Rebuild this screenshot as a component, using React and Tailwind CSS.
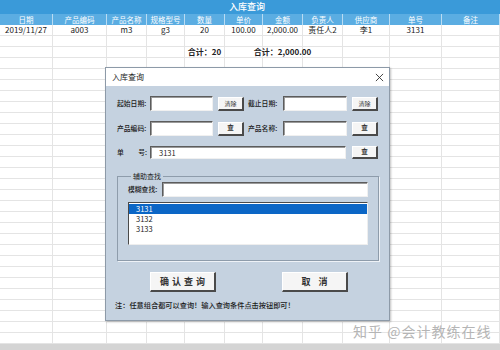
import React from "react";

const cols = [
  { w: "w-[53px]", label: "日期" },
  { w: "w-[54px]", label: "产品编码" },
  { w: "w-[40px]", label: "产品名称" },
  { w: "w-[38px]", label: "规格型号" },
  { w: "w-[40px]", label: "数量" },
  { w: "w-[38px]", label: "单价" },
  { w: "w-[40px]", label: "金额" },
  { w: "w-[40px]", label: "负责人" },
  { w: "w-[47px]", label: "供应商" },
  { w: "w-[52px]", label: "单号" },
  { w: "w-[58px]", label: "备注" },
];

const dataRow = ["2019/11/27", "a003", "m3", "g3", "20", "100.00", "2,000.00", "责任人2", "李1", "3131", ""];
const totalRow = ["", "", "", "", "合计：20", "", "合计：2,000.00", "", "", "", ""];

const font = { fontFamily: '"Noto Sans CJK SC", "Noto Sans", sans-serif' };

function Row({ cells, bold }) {
  return (
    <div className="flex h-[11px]">
      {cols.map((c, i) => (
        <div
          key={i}
          className={`${c.w} shrink-0 border-r border-b border-[#e4e4e4] flex items-center justify-center text-[8px] leading-none whitespace-nowrap text-[#222] ${bold ? "font-bold" : ""}`}
        >
          {cells[i]}
        </div>
      ))}
    </div>
  );
}

function Input({ className = "", children }) {
  return (
    <div
      className={`bg-white border-t border-l border-t-[#5c5c5c] border-l-[#5c5c5c] border-b border-r border-b-[#f0f0f0] border-r-[#f0f0f0] shadow-[inset_1px_1px_0_#9a9a9a] flex items-center pl-[6px] text-[7.5px] text-[#222] ${className}`}
    >
      {children}
    </div>
  );
}

function Btn({ className = "", children }) {
  return (
    <div
      className={`bg-[#f5f5f5] border-t border-l border-white border-b-2 border-r-2 border-b-[#4a4a4a] border-r-[#4a4a4a] flex items-center justify-center text-[#333] ${className}`}
    >
      {children}
    </div>
  );
}

function Label({ className = "", children }) {
  return <div className={`text-[6.8px] font-medium text-[#1a1a1a] whitespace-nowrap ${className}`}>{children}</div>;
}

export default function App() {
  const blanks = Array.from({ length: 26 });
  return (
    <div className="relative w-[500px] h-[350px] bg-white overflow-hidden" style={font}>
      {/* sheet */}
      <div className="h-[14px] bg-[#3a9ad9] flex items-center justify-center text-white text-[9px] font-medium pr-[6px]">
        入库查询
      </div>
      <div className="flex h-[11px] bg-[#5badE2]">
        {cols.map((c, i) => (
          <div
            key={i}
            className={`${c.w} shrink-0 border-r border-[#b9dcf3] flex items-center justify-center text-white text-[7.5px] leading-none`}
          >
            {c.label}
          </div>
        ))}
      </div>
      <Row cells={dataRow} />
      <Row cells={Array(11).fill("")} />
      <Row cells={totalRow} bold />
      {blanks.map((_, i) => (
        <Row key={i} cells={Array(11).fill("")} />
      ))}
      <div className="h-[10px] bg-[#d4d4d4]" />

      {/* watermark */}
      <div className="absolute left-[353px] top-[321px] text-[14px] text-[#b5b5b5] tracking-[1px] whitespace-nowrap">
        知乎 @会计教练在线
      </div>

      {/* dialog */}
      <div className="absolute left-[105px] top-[67px] w-[285px] h-[254px] border border-[#8d9aa8] shadow-[1px_1px_2px_rgba(0,0,0,0.25)] flex flex-col">
        <div className="h-[18px] bg-white flex items-center justify-between pl-[6px] pr-[5px]">
          <span className="text-[8px] text-[#222]">入库查询</span>
          <svg width="9" height="9" viewBox="0 0 10 10" className="text-[#333]">
            <path d="M1 1 L9 9 M9 1 L1 9" stroke="currentColor" strokeWidth="1" />
          </svg>
        </div>
        <div className="flex-1 bg-[#c5d2e0] flex flex-col pl-[11px] pt-[10px]">
          <div className="flex items-center h-[15px]">
            <Label className="w-[33px]">起始日期:</Label>
            <Input className="w-[63px] h-[15px]" />
            <Btn className="ml-[5px] w-[26px] h-[14px] text-[6px]">清除</Btn>
            <Label className="ml-[4px] w-[35px]">截止日期:</Label>
            <Input className="w-[64px] h-[15px]" />
            <Btn className="ml-[5px] w-[26px] h-[14px] text-[6px]">清除</Btn>
          </div>
          <div className="flex items-center h-[15px] mt-[10px]">
            <Label className="w-[33px]">产品编码:</Label>
            <Input className="w-[63px] h-[15px]" />
            <Btn className="ml-[5px] w-[26px] h-[14px] text-[6.5px] font-bold">查</Btn>
            <Label className="ml-[4px] w-[35px]">产品名称:</Label>
            <Input className="w-[64px] h-[15px]" />
            <Btn className="ml-[5px] w-[26px] h-[14px] text-[6.5px] font-bold">查</Btn>
          </div>
          <div className="flex items-center h-[13px] mt-[10px]">
            <Label className="w-[33px] flex justify-between pr-[3px]">
              <span>单</span>
              <span>号:</span>
            </Label>
            <Input className="w-[196px] h-[13px] pl-[8px]">3131</Input>
            <Btn className="ml-[6px] w-[26px] h-[13px] text-[6.5px] font-bold">查</Btn>
          </div>

          <fieldset className="mt-[14px] w-[262px] h-[88px] border border-[#8e9cab] shadow-[1px_1px_0_#eef2f7] px-[10px] pb-[8px]">
            <legend className="ml-[3px] px-[2px] text-[7px] text-[#222] leading-none">辅助查找</legend>
            <div className="flex items-center h-[15px] mt-[2px]">
              <Label className="w-[34px]">模糊查找:</Label>
              <Input className="w-[206px] h-[15px]" />
            </div>
            <div className="mt-[5px] w-[240px] h-[43px] bg-white border-t border-l border-[#4a4a4a] border-b border-r border-b-[#eeeeee] border-r-[#eeeeee] flex flex-col pt-[1px] text-[7.5px] leading-[10px] text-[#222]">
              <div className="bg-[#0b66c6] text-white pl-[7px] h-[10px]">3131</div>
              <div className="pl-[7px]">3132</div>
              <div className="pl-[7px]">3133</div>
            </div>
          </fieldset>

          <div className="flex items-center mt-[11px] pl-[33px]">
            <Btn className="w-[66px] h-[20px] text-[9px] font-bold tracking-[3px] pl-[3px]">确认查询</Btn>
            <Btn className="ml-[66px] w-[66px] h-[20px] text-[9px] font-bold tracking-[8px] pl-[8px]">取消</Btn>
          </div>
          <div className="mt-[8px] -ml-[2px] text-[7.2px] font-medium text-[#1a1a1a] whitespace-nowrap">
            注：任意组合都可以查询！输入查询条件点击按钮即可！
          </div>
        </div>
      </div>
    </div>
  );
}
